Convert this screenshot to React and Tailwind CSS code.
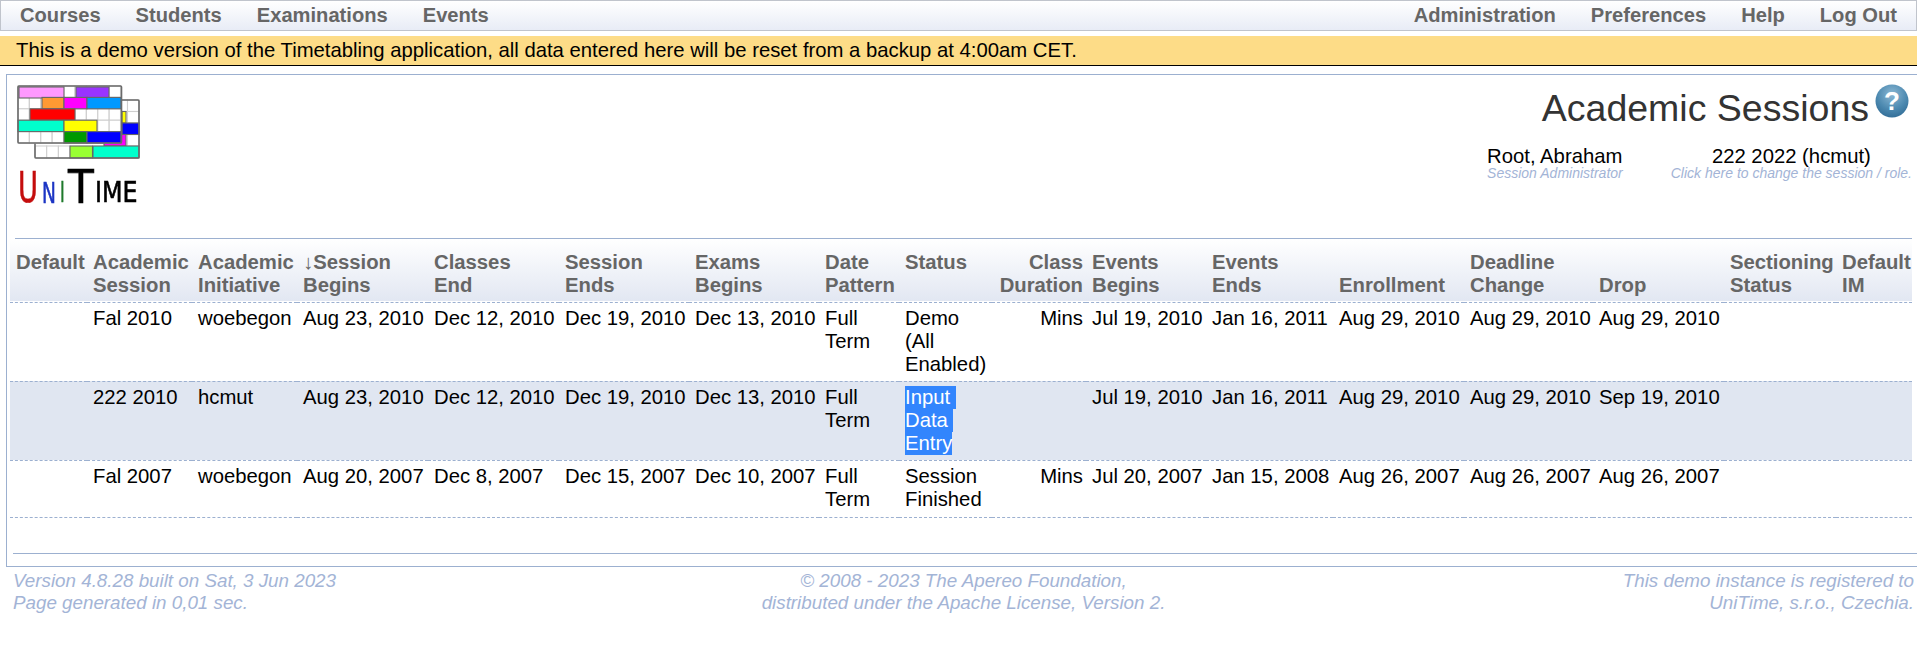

const F = "font-['Liberation_Sans',Arial,sans-serif]";

function Logo() {
  const cell = (x, y, w = 11.3, h = 11.5, fill = "#fff") => (
    <rect key={`${x}-${y}-${w}-${fill}`} x={x} y={y} width={w} height={h} fill={fill} stroke={fill === "#fff" ? "#cfcfcf" : "#666"} strokeWidth="1.1" />
  );
  const frame = (x, y, w, h) => <rect x={x} y={y} width={w} height={h} fill="none" stroke="#6a6a6a" strokeWidth="1.6" rx="1" />;
  const lt = { fontFamily: "'DejaVu Sans',sans-serif", strokeWidth: 0.6 };
  return (
    <svg width="126" height="128" viewBox="-1 -1 126 128" className="block blur-[0.3px]">
      {[14, 25.5, 37, 48.5].map((y) => [98, 109.5].map((x) => cell(x, y, 11.5, 11.5)))}
      {cell(104, 25.5, 4, 11.5, "#ffff00")}
      {cell(104, 37, 17, 11.5, "#0000ff")}
      {cell(86, 48.5, 22, 11.5, "#ff00ff")}
      {[17, 28.7, 40.4].map((x) => cell(x, 60, 11.7, 12))}
      {cell(52, 60, 22.5, 12, "#99ff33")}
      {cell(75, 60, 46, 12, "#00ffcc")}
      {frame(17, 14, 104, 58)}
      {[0, 11.4, 22.8, 34.2, 45.6].map((y) =>
        [0, 11.4, 22.8, 34.2, 45.6, 57, 68.4, 79.8, 91.2].map((x) => cell(x, y))
      )}
      {cell(1, 1, 45, 11, "#ff99ff")}
      {cell(58, 1, 33, 11, "#9933ff")}
      {cell(24, 11.4, 22, 11.4, "#ff9933")}
      {cell(46, 11.4, 23, 11.4, "#ff00ff")}
      {cell(69, 11.4, 34, 11.4, "#0099ff")}
      {cell(12, 22.8, 45, 11.4, "#ff0000")}
      {cell(0, 34.2, 46, 11.4, "#00ffcc")}
      {cell(46, 34.2, 33, 11.4, "#ffff00")}
      {cell(46, 45.6, 23, 11.4, "#009900")}
      {cell(69, 45.6, 34, 11.4, "#0000ff")}
      {frame(0, 0, 103.5, 57)}
      <text transform="translate(0 116) scale(0.65 1)" fontSize="42" fill="#c40d0d" stroke="#c40d0d" {...lt}>U</text>
      <text transform="translate(24 117) scale(0.64 1)" fontSize="29" fill="#1c35c4" stroke="#1c35c4" {...lt}>N</text>
      <text transform="translate(42 116) scale(0.55 1)" fontSize="29" fill="#1f7a2c" stroke="#1f7a2c" {...lt}>I</text>
      <text transform="translate(50 117) scale(0.92 1)" fontSize="46" fill="#000" stroke="#000" {...lt}>T</text>
      <text transform="translate(77 116) scale(0.85 1)" fontSize="28" fill="#000" stroke="#000" {...lt}>IME</text>
    </svg>
  );
}

function HelpIcon() {
  return (
    <svg width="34" height="34" viewBox="0 0 34 34" className="block">
      <defs>
        <radialGradient id="hg" cx="50%" cy="30%" r="75%">
          <stop offset="0%" stopColor="#8cb8d4" />
          <stop offset="60%" stopColor="#4c89b0" />
          <stop offset="100%" stopColor="#2f6a94" />
        </radialGradient>
      </defs>
      <circle cx="17" cy="17" r="16.5" fill="url(#hg)" />
      <text x="17" y="26" textAnchor="middle" fontFamily="'Liberation Sans',sans-serif" fontWeight="bold" fontSize="26" fill="#fff">?</text>
    </svg>
  );
}

const cols = [
  { w: 77, h: ["Default"] },
  { w: 105, h: ["Academic", "Session"] },
  { w: 105, h: ["Academic", "Initiative"] },
  { w: 131, h: ["↓Session", "Begins"] },
  { w: 131, h: ["Classes", "End"] },
  { w: 130, h: ["Session", "Ends"] },
  { w: 130, h: ["Exams", "Begins"] },
  { w: 80, h: ["Date", "Pattern"] },
  { w: 93, h: ["Status"] },
  { w: 94, h: ["Class", "Duration"], right: true },
  { w: 120, h: ["Events", "Begins"] },
  { w: 127, h: ["Events", "Ends"] },
  { w: 131, h: ["", "Enrollment"] },
  { w: 129, h: ["Deadline", "Change"] },
  { w: 131, h: ["", "Drop"] },
  { w: 112, h: ["Sectioning", "Status"] },
  { w: 76, h: ["Default", "IM"] },
];

const rows = [
  {
    cells: ["", "Fal 2010", "woebegon", "Aug 23, 2010", "Dec 12, 2010", "Dec 19, 2010", "Dec 13, 2010", "Full Term", "Demo (All Enabled)", "Mins", "Jul 19, 2010", "Jan 16, 2011", "Aug 29, 2010", "Aug 29, 2010", "Aug 29, 2010", "", ""],
  },
  {
    shaded: true,
    cells: ["", "222 2010", "hcmut", "Aug 23, 2010", "Dec 12, 2010", "Dec 19, 2010", "Dec 13, 2010", "Full Term", "SEL", "", "Jul 19, 2010", "Jan 16, 2011", "Aug 29, 2010", "Aug 29, 2010", "Sep 19, 2010", "", ""],
  },
  {
    cells: ["", "Fal 2007", "woebegon", "Aug 20, 2007", "Dec 8, 2007", "Dec 15, 2007", "Dec 10, 2007", "Full Term", "Session Finished", "Mins", "Jul 20, 2007", "Jan 15, 2008", "Aug 26, 2007", "Aug 26, 2007", "Aug 26, 2007", "", ""],
  },
];

function NavItem({ children }) {
  return <span className="font-bold text-[20.15px] leading-[29px] text-[#666666]">{children}</span>;
}

export default function App() {
  return (
    <div className={`${F} bg-white text-black min-h-[655px] text-[20.3px] leading-[23px]`}>
      <div className="flex justify-between h-[31px] border border-[#c0c4cc] bg-gradient-to-b from-white to-[#e8ecf6] pl-[19px] pr-[19px]">
        <div className="flex gap-[35px]">
          <NavItem>Courses</NavItem>
          <NavItem>Students</NavItem>
          <NavItem>Examinations</NavItem>
          <NavItem>Events</NavItem>
        </div>
        <div className="flex gap-[35px]">
          <NavItem>Administration</NavItem>
          <NavItem>Preferences</NavItem>
          <NavItem>Help</NavItem>
          <NavItem>Log Out</NavItem>
        </div>
      </div>
      <div className="mt-[5px] h-[30px] bg-[#fddc87] border-b border-black pl-[16px] leading-[29px]">
        This is a demo version of the Timetabling application, all data entered here will be reset from a backup at 4:00am CET.
      </div>
      <div className="mt-[8px] ml-[6px] h-[493px] border border-r-0 border-[#9cb0d0] flex flex-col">
        <div className="flex justify-between h-[163px] pl-[10px] pt-[10px]">
          <Logo />
          <div className="flex flex-col items-end">
            <div className="flex items-start mr-[8px]">
              <span className="text-[37.5px] leading-[42px] text-[#333333] mt-[2px]">Academic Sessions</span>
              <span className="ml-[6px] -mt-[1px]"><HelpIcon /></span>
            </div>
            <div className="flex mt-[17px] mr-[5px]">
              <div className="flex flex-col mr-[48px]">
                <span className="leading-[21px]">Root, Abraham</span>
                <span className="text-[14px] leading-[13px] italic text-[#a3b4d6]">Session Administrator</span>
              </div>
              <div className="flex flex-col items-center">
                <span className="leading-[21px]">222 2022 (hcmut)</span>
                <span className="text-[14px] leading-[13px] italic text-[#a3b4d6]">Click here to change the session / role.</span>
              </div>
            </div>
          </div>
        </div>
        <div className="ml-[8px] mr-[5px] border-t border-[#9cb0d0]" />
        <table className="ml-[3px] table-fixed border-collapse w-[1902px]">
          <colgroup>
            {cols.map((c, i) => <col key={i} style={{ width: c.w }} />)}
          </colgroup>
          <thead>
            <tr className="bg-gradient-to-b from-white to-[#e2e7f2] h-[63px] border-b border-dashed border-[#9cb0d0]">
              {cols.map((c, i) => (
                <th key={i} className={`align-top pl-[6px] pr-[3px] pt-[12px] font-bold text-[#666666] whitespace-nowrap ${c.right ? "text-right" : "text-left"}`}>
                  {c.h.map((line, j) => <div key={j} className="h-[23px]">{line}</div>)}
                </th>
              ))}
            </tr>
          </thead>
          <tbody>
            {rows.map((r, i) => (
              <tr key={i} className={`border-b border-dashed border-[#9cb0d0] ${r.shaded ? "bg-[#e0e6f1]" : ""} ${i === 2 ? "h-[57px]" : "h-[79px]"}`}>
                {r.cells.map((v, j) => (
                  <td key={j} className={`align-top pl-[6px] pr-[3px] pt-[4px] ${j === 9 ? "text-right" : ""} ${j === 7 || j === 8 ? "" : "whitespace-nowrap"}`}>
                    {v === "SEL" ? (
                      <div className="text-white">
                        <div className="h-[23px]"><span className="inline-block h-[23px] bg-[#3285fd]">Input&nbsp;</span></div>
                        <div className="h-[23px]"><span className="inline-block h-[23px] bg-[#3285fd]">Data&nbsp;</span></div>
                        <div className="h-[23px]"><span className="inline-block h-[23px] bg-[#3285fd]">Entry</span></div>
                      </div>
                    ) : v}
                  </td>
                ))}
              </tr>
            ))}
          </tbody>
        </table>
        <div className="mt-auto mb-[12px] ml-[6px] border-t border-[#9cb0d0]" />
      </div>
      <div className="flex justify-between ml-[13px] mr-[3px] mt-[3px] italic text-[#a3b4d6] text-[18.8px] leading-[22px]">
        <div className="w-[500px]">
          <div>Version 4.8.28 built on Sat, 3 Jun 2023</div>
          <div>Page generated in 0,01 sec.</div>
        </div>
        <div className="text-center">
          <div>© 2008 - 2023 The Apereo Foundation,</div>
          <div>distributed under the Apache License, Version 2.</div>
        </div>
        <div className="w-[500px] text-right">
          <div>This demo instance is registered to</div>
          <div>UniTime, s.r.o., Czechia.</div>
        </div>
      </div>
    </div>
  );
}
